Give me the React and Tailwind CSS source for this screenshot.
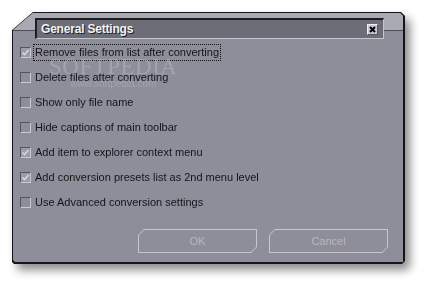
import React from 'react';

const options = [
  { label: 'Remove files from list after converting', checked: true, focused: true },
  { label: 'Delete files after converting', checked: false },
  { label: 'Show only file name', checked: false },
  { label: 'Hide captions of main toolbar', checked: false },
  { label: 'Add item to explorer context menu', checked: true },
  { label: 'Add conversion presets list as 2nd menu level', checked: true },
  { label: 'Use Advanced conversion settings', checked: false },
];

const CheckBox = ({ checked }) => (
  <span
    className={`w-[11px] h-[11px] shrink-0 border border-t-[#55555d] border-l-[#55555d] border-b-[#c9c9d1] border-r-[#c9c9d1] flex items-center justify-center ${
      checked ? 'bg-[#9c9ca7]' : 'bg-[#8e8e9a]'
    }`}
  >
    {checked && (
      <svg width="9" height="9" viewBox="0 0 9 9">
        <path d="M1.5 4.5 L3.5 6.5 L7.5 2" fill="none" stroke="#d6d6de" strokeWidth="1.6" />
      </svg>
    )}
  </span>
);

const Button = ({ children }) => (
  <div className="w-[119px] h-[24px] bg-[#c6c6ce] p-px [clip-path:polygon(6px_0,100%_0,100%_calc(100%_-_6px),calc(100%_-_6px)_100%,0_100%,0_6px)]">
    <div className="w-full h-full bg-[#8e8e9a] flex items-center justify-center text-[11px] text-[#b6b6be] [clip-path:polygon(5px_0,100%_0,100%_calc(100%_-_5px),calc(100%_-_5px)_100%,0_100%,0_5px)]">
      {children}
    </div>
  </div>
);

export default function App() {
  return (
    <div className="w-[425px] h-[285px] bg-white pt-[12px] pl-[12px] overflow-hidden font-['Liberation_Sans',Arial,sans-serif]">
      <div className="w-[393px] h-[252px] drop-shadow-[5px_6px_5px_rgba(0,0,0,0.45)]">
        <div className="w-full h-full bg-[#15151a] pt-px pl-px pr-[2px] pb-[2px] [clip-path:polygon(21px_0,calc(100%_-_4px)_0,100%_4px,100%_calc(100%_-_3px),calc(100%_-_3px)_100%,2px_100%,0_calc(100%_-_2px),0_18px)]">
          <div className="relative w-full h-full bg-[#8e8e9a] flex flex-col [clip-path:polygon(20px_0,calc(100%_-_3px)_0,100%_3px,100%_100%,2px_100%,0_calc(100%_-_2px),0_17px)]">
            {/* header */}
            <div className="h-[26px] shrink-0 pt-[5px] pl-[22px] pr-[19px] bg-[linear-gradient(to_bottom,#a9a9b3_0,#a9a9b3_17px,#4c4c55_17px,#4c4c55_18px,#8e8e9a_18px)]">
              <div className="h-[21px] bg-[#6d6d77] border-t-2 border-l-2 border-t-[#1d1d22] border-l-[#1d1d22] border-b border-r border-b-[#c4c4cc] border-r-[#c4c4cc] flex items-center justify-between pl-[4px] pr-[5px]">
                <span className="text-[12px] font-bold tracking-[-0.2px] text-[#f2f2f2] [text-shadow:1px_1px_0_#202024]">
                  General Settings
                </span>
                <span className="w-[11px] h-[11px] bg-[#c9c9d1] border border-t-[#eeeef2] border-l-[#eeeef2] border-b-[#55555d] border-r-[#55555d] flex items-center justify-center">
                  <svg width="7" height="7" viewBox="0 0 7 7">
                    <path d="M1 1 L6 6 M6 1 L1 6" stroke="#000" strokeWidth="2" />
                  </svg>
                </span>
              </div>
            </div>

            {/* options */}
            <div className="pt-px pl-[7px] flex flex-col">
              {options.map((opt) => (
                <div key={opt.label} className="h-[25px] flex items-center gap-[2px]">
                  <CheckBox checked={opt.checked} />
                  <span
                    className={`text-[11px] text-[#141418] px-[1px] py-[1px] leading-[13px] border border-dotted ${
                      opt.focused ? 'border-[#141418]' : 'border-transparent'
                    }`}
                  >
                    {opt.label}
                  </span>
                </div>
              ))}
            </div>

            {/* buttons */}
            <div className="mt-[14px] pr-[15px] flex justify-end gap-[12px]">
              <Button>OK</Button>
              <Button>Cancel</Button>
            </div>

            {/* watermark */}
            <div className="absolute left-[36px] top-[37px] flex flex-col items-center pointer-events-none">
              <span className="font-['Liberation_Serif',serif] text-[23px] tracking-[0.5px] text-[#b8b8c2] opacity-50">
                SOFTPEDIA
              </span>
              <span className="-mt-[9px] text-[10px] text-[#b8b8c2] opacity-50">www.softpedia.com</span>
            </div>
          </div>
        </div>
      </div>
    </div>
  );
}
